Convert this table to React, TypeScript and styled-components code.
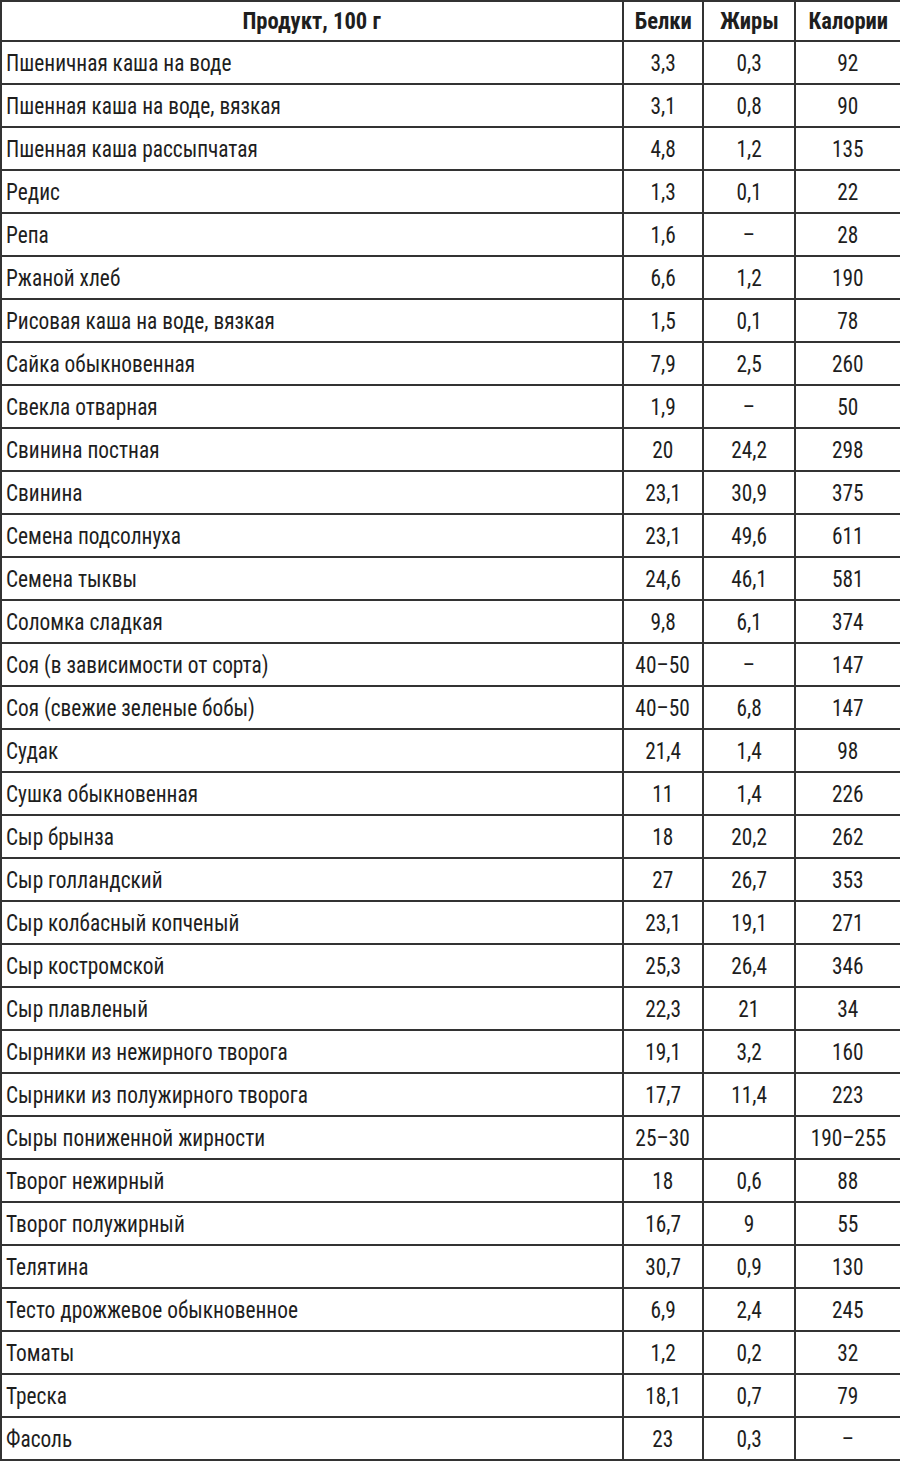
import React from 'react';
import styled, { createGlobalStyle } from 'styled-components';

const GlobalStyle = createGlobalStyle`
  html, body {
    margin: 0;
    padding: 0;
    background: #ffffff;
  }
`;

const Table = styled.table`
  font-family: "Liberation Sans Narrow", "Roboto Condensed", "DejaVu Sans Condensed", "Liberation Sans", sans-serif;
  font-size: 24px;
  color: #1e1e1e;
  width: 900px;
  table-layout: fixed;
  border-collapse: collapse;
  border: 2px solid #333333;
`;

// condensed look of the printed table: squeeze the glyphs a bit
const Text = styled.span<{ $align: 'left' | 'center'; $head?: boolean }>`
  display: inline-block;
  transform: scaleX(${p => (p.$head ? 0.94 : 0.89)});
  transform-origin: ${p => p.$align} center;
`;

const HeaderCell = styled.th`
  height: 38px;
  padding: 0;
  border: 2px solid #333333;
  font-weight: bold;
  text-align: center;
  vertical-align: middle;
  white-space: nowrap;
`;

const NameCell = styled.td`
  height: 41px;
  padding: 0 0 0 4px;
  border: 2px solid #333333;
  text-align: left;
  vertical-align: middle;
  white-space: nowrap;
`;

const NumCell = styled.td`
  height: 41px;
  padding: 0;
  border: 2px solid #333333;
  text-align: center;
  vertical-align: middle;
  white-space: nowrap;
`;

type Row = [string, string, string, string];

const rows: Row[] = [
  ['Пшеничная каша на воде', '3,3', '0,3', '92'],
  ['Пшенная каша на воде, вязкая', '3,1', '0,8', '90'],
  ['Пшенная каша рассыпчатая', '4,8', '1,2', '135'],
  ['Редис', '1,3', '0,1', '22'],
  ['Репа', '1,6', '–', '28'],
  ['Ржаной хлеб', '6,6', '1,2', '190'],
  ['Рисовая каша на воде, вязкая', '1,5', '0,1', '78'],
  ['Сайка обыкновенная', '7,9', '2,5', '260'],
  ['Свекла отварная', '1,9', '–', '50'],
  ['Свинина постная', '20', '24,2', '298'],
  ['Свинина', '23,1', '30,9', '375'],
  ['Семена подсолнуха', '23,1', '49,6', '611'],
  ['Семена тыквы', '24,6', '46,1', '581'],
  ['Соломка сладкая', '9,8', '6,1', '374'],
  ['Соя (в зависимости от сорта)', '40–50', '–', '147'],
  ['Соя (свежие зеленые бобы)', '40–50', '6,8', '147'],
  ['Судак', '21,4', '1,4', '98'],
  ['Сушка обыкновенная', '11', '1,4', '226'],
  ['Сыр брынза', '18', '20,2', '262'],
  ['Сыр голландский', '27', '26,7', '353'],
  ['Сыр колбасный копченый', '23,1', '19,1', '271'],
  ['Сыр костромской', '25,3', '26,4', '346'],
  ['Сыр плавленый', '22,3', '21', '34'],
  ['Сырники из нежирного творога', '19,1', '3,2', '160'],
  ['Сырники из полужирного творога', '17,7', '11,4', '223'],
  ['Сыры пониженной жирности', '25–30', '', '190–255'],
  ['Творог нежирный', '18', '0,6', '88'],
  ['Творог полужирный', '16,7', '9', '55'],
  ['Телятина', '30,7', '0,9', '130'],
  ['Тесто дрожжевое обыкновенное', '6,9', '2,4', '245'],
  ['Томаты', '1,2', '0,2', '32'],
  ['Треска', '18,1', '0,7', '79'],
  ['Фасоль', '23', '0,3', '–'],
];

const headers = ['Продукт, 100 г', 'Белки', 'Жиры', 'Калории'];

export default function App() {
  return (
    <>
      <GlobalStyle />
      <Table>
        <colgroup>
          <col style={{ width: 622 }} />
          <col style={{ width: 80 }} />
          <col style={{ width: 92 }} />
          <col style={{ width: 106 }} />
        </colgroup>
        <thead>
          <tr>
            {headers.map(h => (
              <HeaderCell key={h}>
                <Text $align="center" $head>{h}</Text>
              </HeaderCell>
            ))}
          </tr>
        </thead>
        <tbody>
          {rows.map((r, i) => (
            <tr key={i}>
              <NameCell><Text $align="left">{r[0]}</Text></NameCell>
              <NumCell><Text $align="center">{r[1]}</Text></NumCell>
              <NumCell><Text $align="center">{r[2]}</Text></NumCell>
              <NumCell><Text $align="center">{r[3]}</Text></NumCell>
            </tr>
          ))}
        </tbody>
      </Table>
    </>
  );
}
